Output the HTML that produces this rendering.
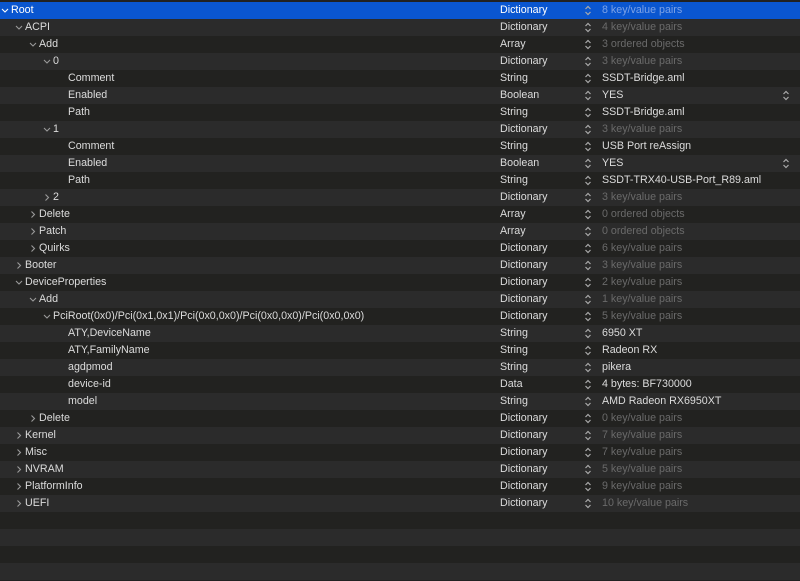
<!DOCTYPE html><html><head><meta charset="utf-8"><style>
body{margin:0;width:800px;height:581px;background:#212121;overflow:hidden;font-family:"Liberation Sans",sans-serif;font-size:10.7px;color:#dcdcdc;position:relative}
.r{position:absolute;left:0;width:800px;height:17px;line-height:17px;white-space:nowrap}
.o{background:#2b2b2b}.e{background:#222220}
.sel{background:#0a56d0;color:#fff}
.k{position:absolute}
.l0{left:11px}.l1{left:25px}.l2{left:39px}.l3{left:53px}.l4{left:68px}
.c{position:absolute;top:4px}
.c0{left:1px}.c1{left:15px}.c2{left:29px}.c3{left:43px}
.t{position:absolute;left:500px}
.s{position:absolute;left:584px;top:0;width:8px;height:17px}
.v{position:absolute;left:602px}
.g{color:#6a6a6a}
.sel .g{color:#7da2e6}
.b{position:absolute;left:782px;top:0;width:8px;height:17px}
svg{display:block}
</style></head><body>
<svg width="0" height="0" style="position:absolute"><defs>
<g id="st"><path d="M1.5 7 L4 4.5 L6.5 7 M1.5 10 L4 12.5 L6.5 10" fill="none" stroke="#aaa" stroke-width="1.2"/></g>
<g id="dn"><path d="M1 3 L4 6 L7 3" fill="none" stroke="#9a9a9a" stroke-width="1.1"/></g>
<g id="rt"><path d="M2.5 1.5 L5.5 4.5 L2.5 7.5" fill="none" stroke="#9a9a9a" stroke-width="1.1"/></g>
</defs></svg>

<div class="r sel" style="top:2px"><svg class="c c0" width="8" height="9"><path d="M1 3 L4 6 L7 3" fill="none" stroke="#fff" stroke-width="1.1"/></svg><span class="k l0">Root</span><span class="t">Dictionary</span><svg class="s"><use href="#st"/></svg><span class="v g">8 key/value pairs</span></div>
<div class="r o" style="top:19px"><svg class="c c1" width="8" height="9"><use href="#dn"/></svg><span class="k l1">ACPI</span><span class="t">Dictionary</span><svg class="s"><use href="#st"/></svg><span class="v g">4 key/value pairs</span></div>
<div class="r e" style="top:36px"><svg class="c c2" width="8" height="9"><use href="#dn"/></svg><span class="k l2">Add</span><span class="t">Array</span><svg class="s"><use href="#st"/></svg><span class="v g">3 ordered objects</span></div>
<div class="r o" style="top:53px"><svg class="c c3" width="8" height="9"><use href="#dn"/></svg><span class="k l3">0</span><span class="t">Dictionary</span><svg class="s"><use href="#st"/></svg><span class="v g">3 key/value pairs</span></div>
<div class="r e" style="top:70px"><span class="k l4">Comment</span><span class="t">String</span><svg class="s"><use href="#st"/></svg><span class="v">SSDT-Bridge.aml</span></div>
<div class="r o" style="top:87px"><span class="k l4">Enabled</span><span class="t">Boolean</span><svg class="s"><use href="#st"/></svg><span class="v">YES</span><svg class="b"><use href="#st"/></svg></div>
<div class="r e" style="top:104px"><span class="k l4">Path</span><span class="t">String</span><svg class="s"><use href="#st"/></svg><span class="v">SSDT-Bridge.aml</span></div>
<div class="r o" style="top:121px"><svg class="c c3" width="8" height="9"><use href="#dn"/></svg><span class="k l3">1</span><span class="t">Dictionary</span><svg class="s"><use href="#st"/></svg><span class="v g">3 key/value pairs</span></div>
<div class="r e" style="top:138px"><span class="k l4">Comment</span><span class="t">String</span><svg class="s"><use href="#st"/></svg><span class="v">USB Port reAssign</span></div>
<div class="r o" style="top:155px"><span class="k l4">Enabled</span><span class="t">Boolean</span><svg class="s"><use href="#st"/></svg><span class="v">YES</span><svg class="b"><use href="#st"/></svg></div>
<div class="r e" style="top:172px"><span class="k l4">Path</span><span class="t">String</span><svg class="s"><use href="#st"/></svg><span class="v">SSDT-TRX40-USB-Port_R89.aml</span></div>
<div class="r o" style="top:189px"><svg class="c c3" width="8" height="9"><use href="#rt"/></svg><span class="k l3">2</span><span class="t">Dictionary</span><svg class="s"><use href="#st"/></svg><span class="v g">3 key/value pairs</span></div>
<div class="r e" style="top:206px"><svg class="c c2" width="8" height="9"><use href="#rt"/></svg><span class="k l2">Delete</span><span class="t">Array</span><svg class="s"><use href="#st"/></svg><span class="v g">0 ordered objects</span></div>
<div class="r o" style="top:223px"><svg class="c c2" width="8" height="9"><use href="#rt"/></svg><span class="k l2">Patch</span><span class="t">Array</span><svg class="s"><use href="#st"/></svg><span class="v g">0 ordered objects</span></div>
<div class="r e" style="top:240px"><svg class="c c2" width="8" height="9"><use href="#rt"/></svg><span class="k l2">Quirks</span><span class="t">Dictionary</span><svg class="s"><use href="#st"/></svg><span class="v g">6 key/value pairs</span></div>
<div class="r o" style="top:257px"><svg class="c c1" width="8" height="9"><use href="#rt"/></svg><span class="k l1">Booter</span><span class="t">Dictionary</span><svg class="s"><use href="#st"/></svg><span class="v g">3 key/value pairs</span></div>
<div class="r e" style="top:274px"><svg class="c c1" width="8" height="9"><use href="#dn"/></svg><span class="k l1">DeviceProperties</span><span class="t">Dictionary</span><svg class="s"><use href="#st"/></svg><span class="v g">2 key/value pairs</span></div>
<div class="r o" style="top:291px"><svg class="c c2" width="8" height="9"><use href="#dn"/></svg><span class="k l2">Add</span><span class="t">Dictionary</span><svg class="s"><use href="#st"/></svg><span class="v g">1 key/value pairs</span></div>
<div class="r e" style="top:308px"><svg class="c c3" width="8" height="9"><use href="#dn"/></svg><span class="k l3">PciRoot(0x0)/Pci(0x1,0x1)/Pci(0x0,0x0)/Pci(0x0,0x0)/Pci(0x0,0x0)</span><span class="t">Dictionary</span><svg class="s"><use href="#st"/></svg><span class="v g">5 key/value pairs</span></div>
<div class="r o" style="top:325px"><span class="k l4">ATY,DeviceName</span><span class="t">String</span><svg class="s"><use href="#st"/></svg><span class="v">6950 XT</span></div>
<div class="r e" style="top:342px"><span class="k l4">ATY,FamilyName</span><span class="t">String</span><svg class="s"><use href="#st"/></svg><span class="v">Radeon RX</span></div>
<div class="r o" style="top:359px"><span class="k l4">agdpmod</span><span class="t">String</span><svg class="s"><use href="#st"/></svg><span class="v">pikera</span></div>
<div class="r e" style="top:376px"><span class="k l4">device-id</span><span class="t">Data</span><svg class="s"><use href="#st"/></svg><span class="v">4 bytes: BF730000</span></div>
<div class="r o" style="top:393px"><span class="k l4">model</span><span class="t">String</span><svg class="s"><use href="#st"/></svg><span class="v">AMD Radeon RX6950XT</span></div>
<div class="r e" style="top:410px"><svg class="c c2" width="8" height="9"><use href="#rt"/></svg><span class="k l2">Delete</span><span class="t">Dictionary</span><svg class="s"><use href="#st"/></svg><span class="v g">0 key/value pairs</span></div>
<div class="r o" style="top:427px"><svg class="c c1" width="8" height="9"><use href="#rt"/></svg><span class="k l1">Kernel</span><span class="t">Dictionary</span><svg class="s"><use href="#st"/></svg><span class="v g">7 key/value pairs</span></div>
<div class="r e" style="top:444px"><svg class="c c1" width="8" height="9"><use href="#rt"/></svg><span class="k l1">Misc</span><span class="t">Dictionary</span><svg class="s"><use href="#st"/></svg><span class="v g">7 key/value pairs</span></div>
<div class="r o" style="top:461px"><svg class="c c1" width="8" height="9"><use href="#rt"/></svg><span class="k l1">NVRAM</span><span class="t">Dictionary</span><svg class="s"><use href="#st"/></svg><span class="v g">5 key/value pairs</span></div>
<div class="r e" style="top:478px"><svg class="c c1" width="8" height="9"><use href="#rt"/></svg><span class="k l1">PlatformInfo</span><span class="t">Dictionary</span><svg class="s"><use href="#st"/></svg><span class="v g">9 key/value pairs</span></div>
<div class="r o" style="top:495px"><svg class="c c1" width="8" height="9"><use href="#rt"/></svg><span class="k l1">UEFI</span><span class="t">Dictionary</span><svg class="s"><use href="#st"/></svg><span class="v g">10 key/value pairs</span></div>
<div class="r e" style="top:512px"></div>
<div class="r o" style="top:529px"></div>
<div class="r e" style="top:546px"></div>
<div class="r o" style="top:563px"></div>
</body></html>
